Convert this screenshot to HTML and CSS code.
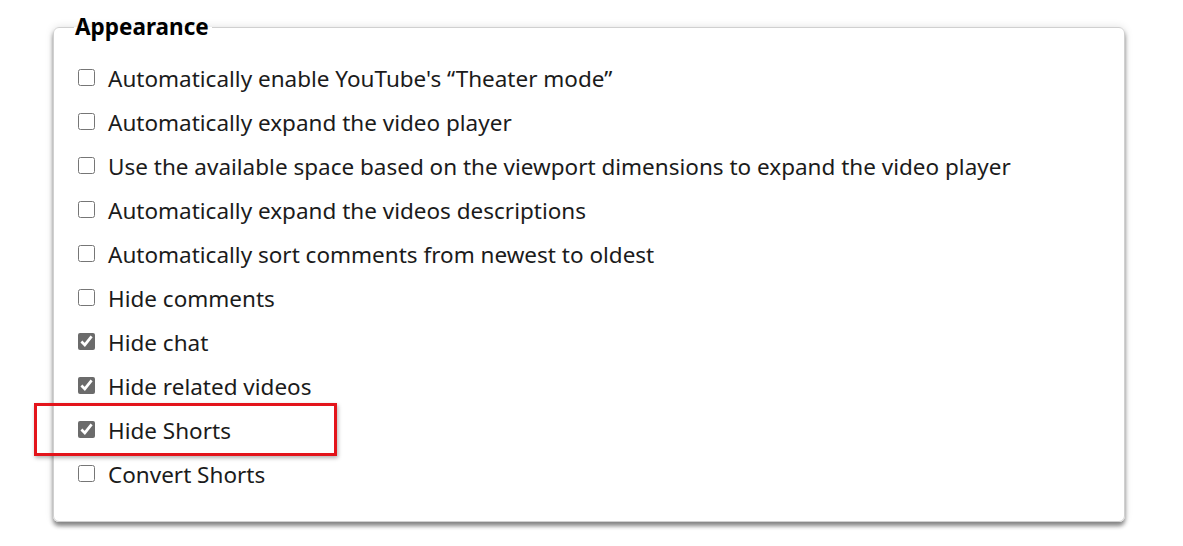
FILE: index.html
```html
<!DOCTYPE html>
<html lang="en">
<head>
    <meta charset="UTF-8">
    <meta name="viewport" content="width=device-width, initial-scale=1.0">
    <title>Appearance</title>
    <link rel="stylesheet" href="styles.css">
</head>
<body>
    <div class="card">
        <fieldset class="settings">
            <legend>Appearance</legend>
            <label class="option"><input type="checkbox"><span>Automatically enable YouTube's “Theater mode”</span></label>
            <label class="option"><input type="checkbox"><span>Automatically expand the video player</span></label>
            <label class="option"><input type="checkbox"><span>Use the available space based on the viewport dimensions to expand the video player</span></label>
            <label class="option"><input type="checkbox"><span>Automatically expand the videos descriptions</span></label>
            <label class="option"><input type="checkbox"><span>Automatically sort comments from newest to oldest</span></label>
            <label class="option"><input type="checkbox"><span>Hide comments</span></label>
            <label class="option"><input type="checkbox" checked><span>Hide chat</span></label>
            <label class="option"><input type="checkbox" checked><span>Hide related videos</span></label>
            <label class="option highlighted"><input type="checkbox" checked><span>Hide Shorts</span><i class="mark"></i></label>
            <label class="option"><input type="checkbox"><span>Convert Shorts</span></label>
        </fieldset>
    </div>
</body>
</html>
```

FILE: styles.css
```css
body {
    margin: 0;
    padding: 27px 58px 25px 53px;
    background-color: #fff;
    font-family: "Noto Sans", "Open Sans", sans-serif;
    color: #1b1b1b;
}

.card {
    display: flow-root;
    border-radius: 6px;
    box-shadow: 0 4px 4px rgba(0, 0, 0, 0.45), 0 0 8px rgba(0, 0, 0, 0.12);
}

.settings {
    margin: -15px 0 0 0;
    padding: 15px 24px 24px 24px;
    border: 1px solid #d0d0d0;
    border-radius: 6px;
    background-color: #fff;
}

.settings legend {
    margin-left: -4px;
    padding: 0 3px 0 1px;
    font-size: 22.5px;
    font-weight: bold;
    line-height: 30px;
    color: #000;
}

.option {
    position: relative;
    display: flex;
    align-items: center;
    height: 44px;
    font-size: 22.5px;
}

.option input {
    width: 17px;
    height: 17px;
    margin: 0 13px 3px 0;
    accent-color: #6b6b6b;
}

.option span {
    line-height: 28px;
}

.mark {
    position: absolute;
    left: -44px;
    top: -6px;
    width: 297px;
    height: 47px;
    border: 3px solid #e3141b;
    box-shadow: 1px 2px 4px rgba(0, 0, 0, 0.3);
    pointer-events: none;
}
```
